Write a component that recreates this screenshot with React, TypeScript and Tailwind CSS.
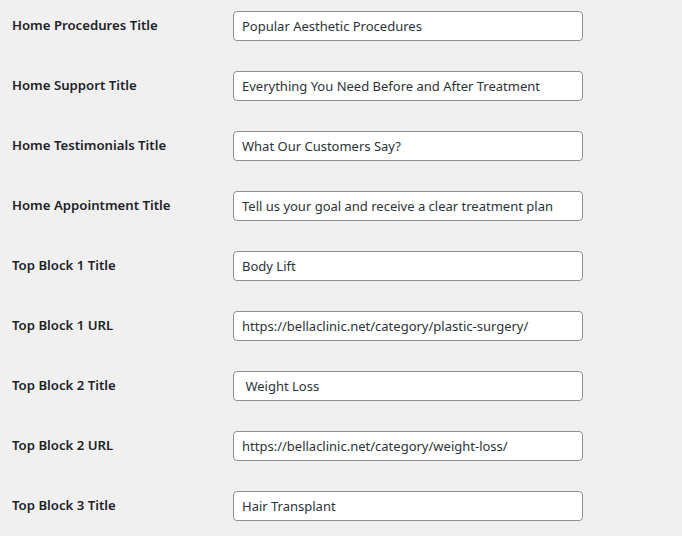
import React from "react";

const rows: { label: string; value: string }[] = [
  { label: "Home Procedures Title", value: "Popular Aesthetic Procedures" },
  { label: "Home Support Title", value: "Everything You Need Before and After Treatment" },
  { label: "Home Testimonials Title", value: "What Our Customers Say?" },
  { label: "Home Appointment Title", value: "Tell us your goal and receive a clear treatment plan" },
  { label: "Top Block 1 Title", value: "Body Lift" },
  { label: "Top Block 1 URL", value: "https://bellaclinic.net/category/plastic-surgery/" },
  { label: "Top Block 2 Title", value: " Weight Loss" },
  { label: "Top Block 2 URL", value: "https://bellaclinic.net/category/weight-loss/" },
  { label: "Top Block 3 Title", value: "Hair Transplant" },
];

export default function App() {
  return (
    <div
      className="w-[682px] h-[536px] overflow-hidden bg-[#f0f0f1]"
      style={{ fontFamily: '"Noto Sans", "Open Sans", sans-serif' }}
    >
      <div className="-mt-[4px] pl-[12px] flex flex-col">
        {rows.map((r) => (
          <div key={r.label} className="flex h-[60px] items-start">
            <label className="w-[221px] shrink-0 mt-[20px] text-[13.2px] leading-[18px] font-semibold text-[#1d2327]">
              {r.label}
            </label>
            <input
              type="text"
              defaultValue={r.value}
              className="mt-[15px] w-[350px] h-[30px] pl-[8px] pr-[4px] py-0 rounded-[4px] border border-[#8c8f94] bg-white text-[13px] text-[#2c3338] outline-none"
            />
          </div>
        ))}
      </div>
    </div>
  );
}
